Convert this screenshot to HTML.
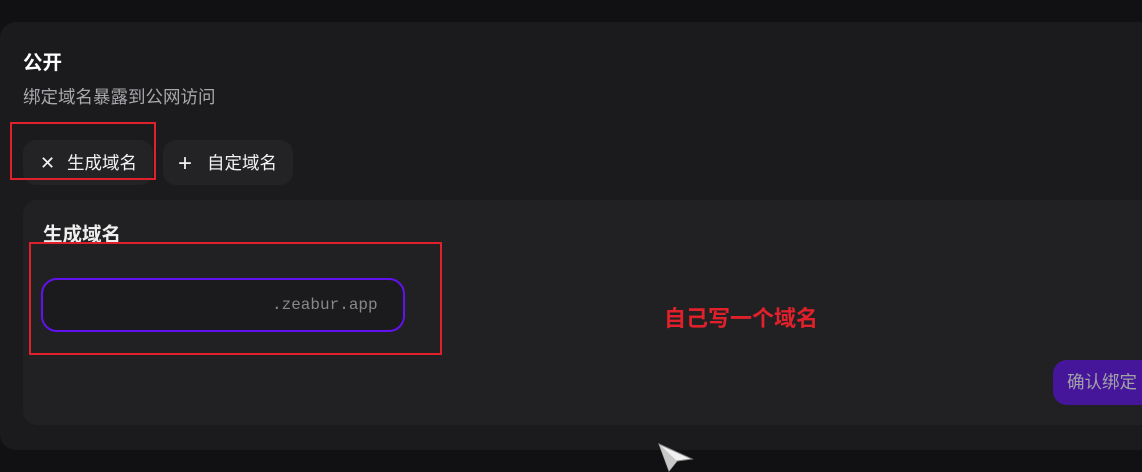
<!DOCTYPE html>
<html><head><meta charset="utf-8"><style>
*{margin:0;padding:0;box-sizing:border-box}
body{width:1142px;height:471px;background:#111113;position:relative;overflow:hidden;font-family:"Liberation Sans","Noto Sans CJK SC",sans-serif}
.abs{position:absolute}
.card{left:0;top:22px;width:1160px;height:428px;background:#1b1b1d;border-radius:16px}
.inner{left:23px;top:200px;width:1140px;height:225px;background:#212123;border-radius:14px}
.btn{top:140px;height:45px;background:#232325;border-radius:13px;color:#f2f2f2;font-size:17.5px;line-height:47px}
.red{border:2px solid #e0202a}
</style></head><body>
<div class="abs card"></div>
<div class="abs" style="left:23px;top:49px;color:#fff;font-size:19.5px;font-weight:bold;line-height:28px">公开</div>
<div class="abs" style="left:23px;top:84px;color:#a8a8ac;font-size:17.5px;line-height:26px">绑定域名暴露到公网访问</div>
<div class="abs btn" style="left:23px;width:130px"><span style="position:absolute;left:17px;font-size:18px">✕</span><span style="position:absolute;left:44px">生成域名</span></div>
<div class="abs btn" style="left:163px;width:130px"><span style="position:absolute;left:15px;font-size:24px;font-weight:300">+</span><span style="position:absolute;left:44px">自定域名</span></div>
<div class="abs red" style="left:10px;top:122px;width:146px;height:58px"></div>
<div class="abs inner"></div>
<div class="abs" style="left:43px;top:221px;height:21px;overflow:hidden;color:#eee;font-size:19.5px;font-weight:bold;line-height:28px">生成域名</div>
<div class="abs red" style="left:29px;top:242px;width:413px;height:113px"></div>
<div class="abs" style="left:41px;top:278px;width:364px;height:54px;border:2.5px solid #6212ee;border-radius:16px;background:#1b1b1d"></div>
<div class="abs" style="left:272px;top:294px;color:#888;font-family:'Liberation Mono',monospace;font-size:16px;line-height:22px">.zeabur.app</div>
<div class="abs" style="left:664px;top:304px;color:#e0202a;font-size:22px;font-weight:bold;line-height:30px">自己写一个域名</div>
<div class="abs" style="left:1053px;top:360px;width:110px;height:45px;background:#46169a;border-radius:14px;color:#a2a2a6;font-size:17.5px;line-height:45px;padding-left:14px">确认绑定</div>
<svg class="abs" style="left:656px;top:442px" width="40" height="30" viewBox="0 0 40 30"><path d="M3 2 L36 17 L21 19 L13 29 Z" fill="#f0f0f0" stroke="#888" stroke-width="1"/><path d="M3 2 L21 19 L13 29Z" fill="#c8c8c8"/></svg>
</body></html>
